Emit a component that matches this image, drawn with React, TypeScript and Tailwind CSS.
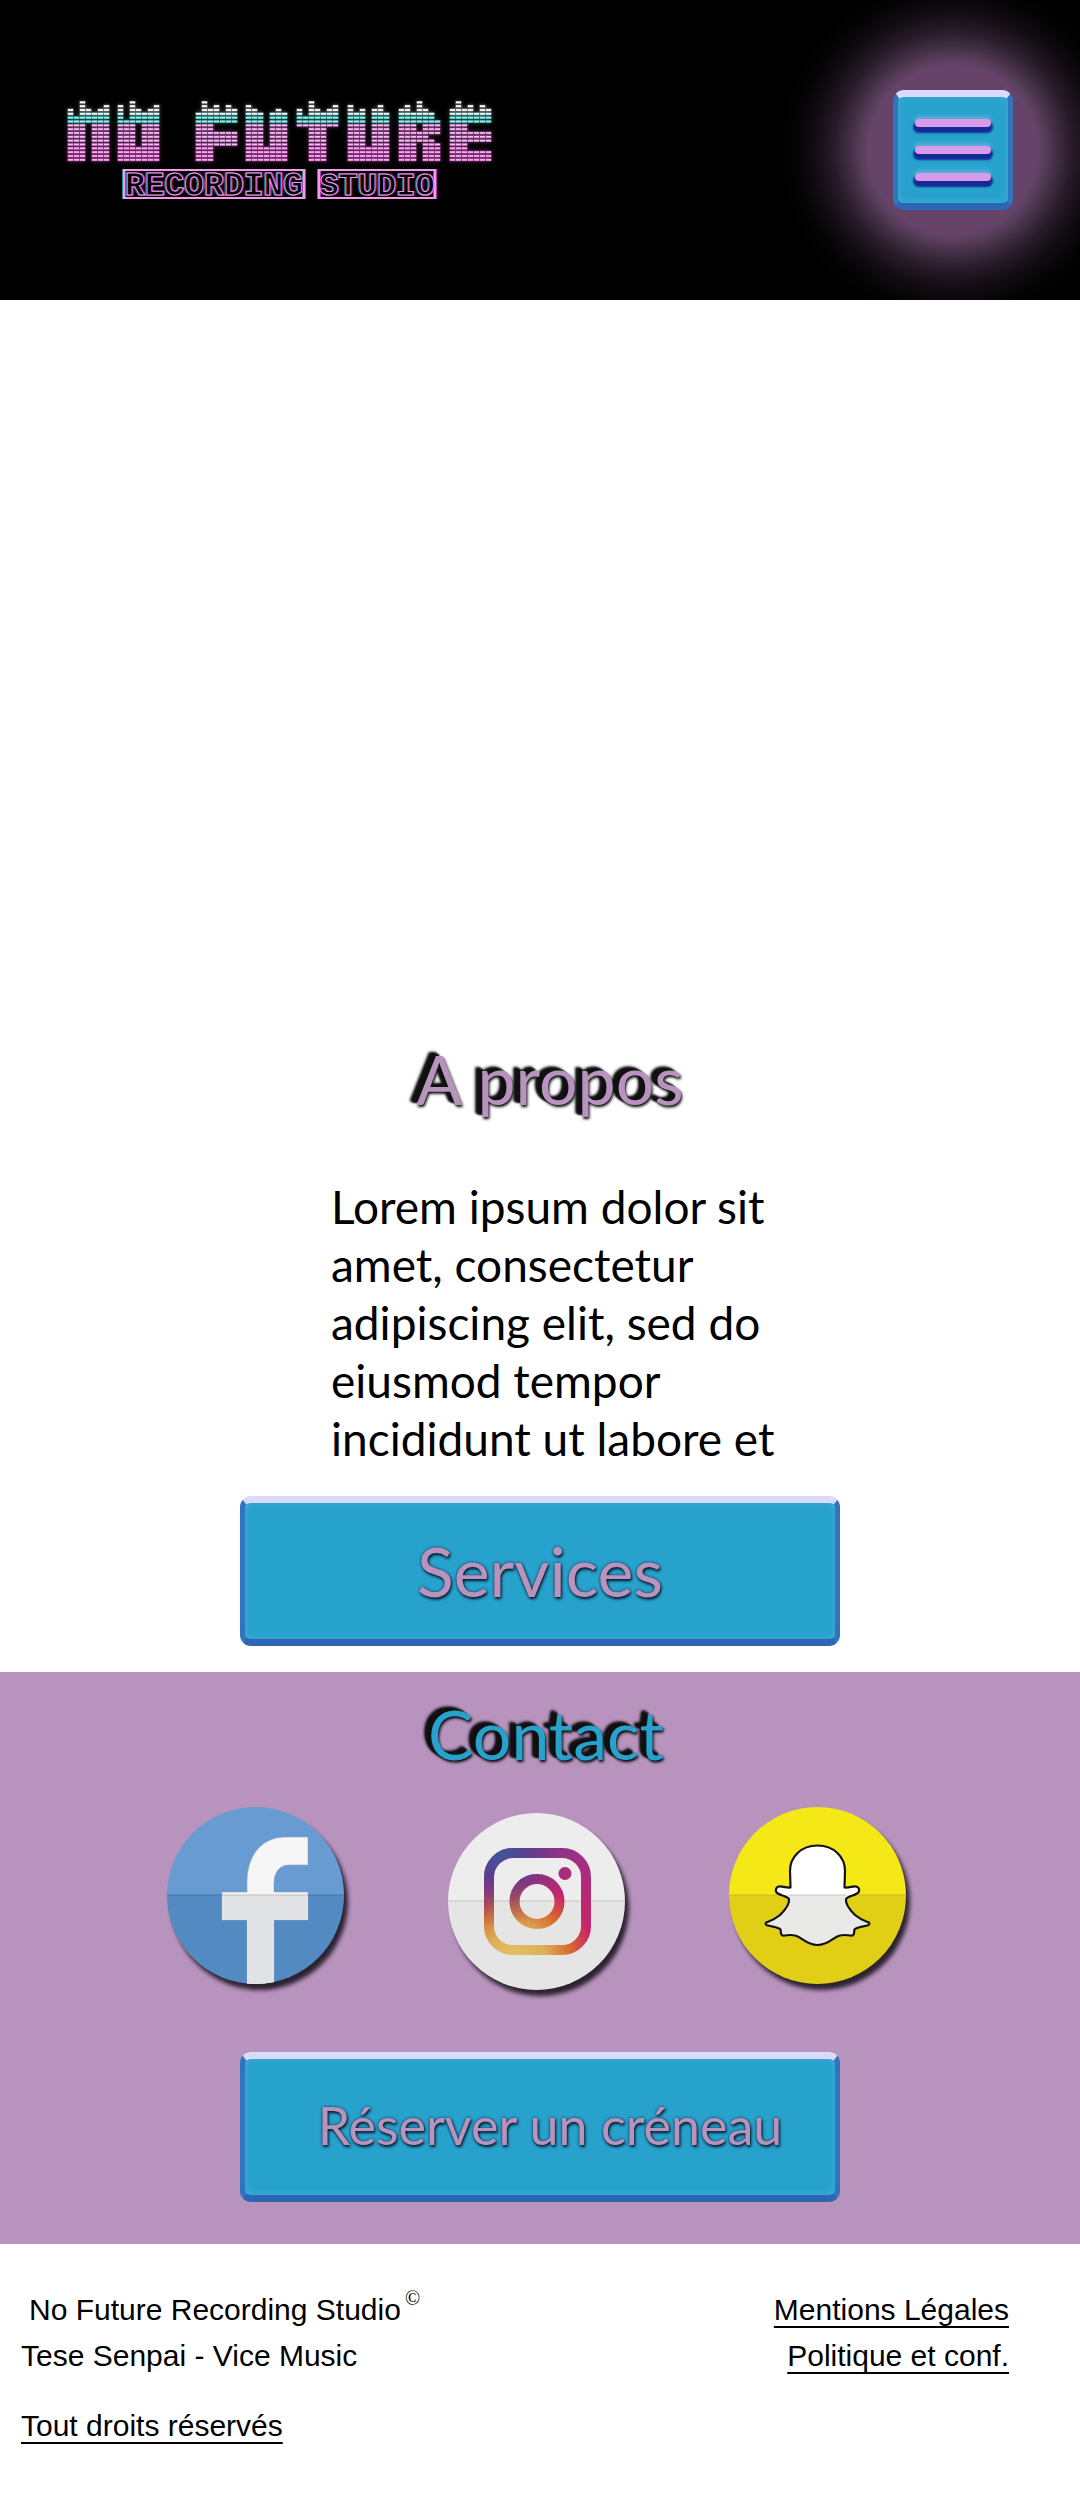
import type { ReactNode } from "react";

// Equaliser columns of the wordmark, one entry per letter, top row first.
const BLOCK = "XXXXXXX";
const LEGS = "XXX.XXX";
const LEFT = "XXX....";
const STEM = "..XXX..";
const rep = (row: string, n: number) => Array.from({ length: n }, () => row);

const WORDMARK: { x: number; rows: string[] }[] = [
  { x: 68, rows: ["..X....", "..X...X", "X.XX.XX", "X.XXXXX", BLOCK, BLOCK, ...rep(LEGS, 10)] },
  { x: 118, rows: ["..X....", "X.X...X", "X.XX.XX", "X.XXXXX", "X.XXXXX", BLOCK, ...rep(LEGS, 6), ...rep(BLOCK, 4)] },
  { x: 196, rows: [".X.....", ".X.X.X.", ".XXX.XX", BLOCK, BLOCK, BLOCK, LEFT, LEFT, ...rep(BLOCK, 4), ...rep(LEFT, 4)] },
  { x: 246, rows: [".......", "X......", "XX...X.", ...rep(LEGS, 9), ...rep(BLOCK, 4)] },
  { x: 297, rows: ["..X....", "..X...X", "X.XX.XX", "X.XXXXX", BLOCK, BLOCK, BLOCK, ...rep(STEM, 9)] },
  { x: 348, rows: [".......", "X....X.", "X.X.XX.", ...rep(LEGS, 9), ...rep(BLOCK, 4)] },
  { x: 399, rows: ["...X...", ".X.X...", "XX.XX..", "XXXXXX.", "XXXXXX.", BLOCK, LEGS, LEGS, BLOCK, "XXXXX..", "XXXXXX.", ...rep(LEGS, 5)] },
  { x: 450, rows: [".X.....", ".X.X.X.", "XXXX.XX", BLOCK, BLOCK, BLOCK, LEFT, LEFT, BLOCK, BLOCK, BLOCK, LEFT, LEFT, BLOCK, BLOCK, BLOCK] },
];

function rowColors(r: number): [string, string] {
  if (r < 3) return ["#8c8c8c", "#ffffff"];
  if (r === 3) return ["#6fb0b0", "#e6fbfb"];
  if (r < 6) return ["#2f9c9c", "#8ff0ea"];
  if (r < 12) return ["#a0489c", "#f9bdf4"];
  return ["#c03cb4", "#fcaaf2"];
}

function Logo() {
  const cells: ReactNode[] = [];
  WORDMARK.forEach(({ x, rows }, l) =>
    rows.forEach((row, r) =>
      row.split("").forEach((c, i) => {
        if (c !== "X") return;
        const [edge, core] = rowColors(r);
        const cx = x + i * 6;
        const cy = 101 + r * 3.83;
        cells.push(
          <g key={`${l}-${r}-${i}`}>
            <rect x={cx - 0.5} y={cy} width="6" height="2.7" fill={edge} />
            <rect x={cx} y={cy + 0.5} width="5" height="1.7" fill={core} />
          </g>
        );
      })
    )
  );
  const frames = [
    { x: 124, w: 180, word: "RECORDING" },
    { x: 319, w: 116, word: "STUDIO" },
  ];
  return (
    <svg
      viewBox="60 92 440 116"
      className="w-[440px] h-[116px] shrink"
      role="img"
      aria-label="No Future Recording Studio"
    >
      <defs>
        <filter id="neon" x="-5%" y="-10%" width="110%" height="120%">
          <feGaussianBlur stdDeviation="2" result="b" />
          <feComponentTransfer in="b" result="dim">
            <feFuncA type="linear" slope="0.45" />
          </feComponentTransfer>
          <feMerge>
            <feMergeNode in="dim" />
            <feMergeNode in="SourceGraphic" />
          </feMerge>
        </filter>
      </defs>
      <g filter="url(#neon)">{cells}</g>
      {[
        { dx: -1, color: "#2f8b96", w: 1 },
        { dx: 1, color: "#c02fb4", w: 1 },
        { dx: 0, color: "#ee9be8", w: 1 },
      ].map(({ dx, color, w }) => (
        <g key={color} transform={`translate(${dx} 0)`} fill={dx === 0 ? "#000" : "none"} stroke={color} strokeWidth={w}>
          {frames.map((f) => (
            <g key={f.word}>
              <rect x={f.x} y="170" width={f.w} height="28" fill="none" strokeWidth="2" />
              <text
                x={f.x + f.w / 2}
                y="195"
                textAnchor="middle"
                fontFamily="'Liberation Mono', monospace"
                fontWeight="700"
                fontSize={f.word === "STUDIO" ? 32 : 33}
              >
                {f.word}
              </text>
            </g>
          ))}
        </g>
      ))}
    </svg>
  );
}

const PLATE =
  "border-t-[7px] border-x-[5px] border-b-[7px] border-t-[#dadafa] border-x-[#3074bb] border-b-[#2c66b5] rounded-[11px] bg-[#26a2cd] shadow-[inset_0_0_8px_#49a8d6]";

const RAISED_SHADOW = "[text-shadow:-7px_-4px_3px_#111,-6px_-3px_2px_#111,-4px_-2px_2px_#111,1px_2px_3px_#000]";
const SOFT_SHADOW = "[text-shadow:1px_2px_3px_#0a1a2a,0_0_3px_#1c3850]";

function PlateButton({ children, className }: { children: ReactNode; className: string }) {
  return (
    <button
      type="button"
      className={`${PLATE} ${SOFT_SHADOW} mx-auto flex h-[150px] w-full max-w-[600px] items-center justify-center text-[#b793be] ${className}`}
    >
      {children}
    </button>
  );
}

function Disc({ id, top, bottom, split, children }: { id: string; top: string; bottom: string; split: string; children: ReactNode }) {
  return (
    <svg viewBox="0 0 177 177" className="size-[177px] overflow-visible drop-shadow-[4px_6px_2px_#2c2230]" aria-hidden="true">
      <defs>
        <clipPath id={`disc-${id}`}>
          <circle cx="88.5" cy="88.5" r="88.5" />
        </clipPath>
      </defs>
      <g clipPath={`url(#disc-${id})`}>
        <rect width="177" height="88" fill={top} />
        <rect y="88" width="177" height="89" fill={bottom} />
        <rect y="87.5" width="177" height="1" fill={split} />
        {children}
      </g>
    </svg>
  );
}

const F_PATH = "M80 180V113H55V85H80V75C80 48 95 30 119 30H141V58H122C112 58 107 66 107 76V85H141V113H107V180Z";
const GHOST =
  "M88.5 38.5C72 38.5 61 50 61 64L61.5 80.5C57 81 53 79 50 79.5C46 80.5 46 85 49 86.5C53 89 58 89 60 92C61 97 56 103 51 108C45 113 41 114 37 115.5C36 117 37 118 39 118.5C44 120 49 120 51.5 122.5C52 125 51.5 128 53.5 128.5C57 129 61 127 66 128.5C73 130 77 138 88.5 138C100 138 104 130 111 128.5C116 127 120 129 123.5 128.5C125.5 128 125 125 125.5 122.5C128 120 133 120 138 118.5C140 118 141 117 140 115.5C136 114 132 113 126 108C121 103 116 97 117 92C119 89 124 89 128 86.5C131 85 131 80.5 127 79.5C124 79 120 81 115.5 80.5L116 64C116 50 105 38.5 88.5 38.5Z";

function FacebookIcon() {
  return (
    <Disc id="fb" top="#689bd2" bottom="#548ac2" split="#4379ae">
      <path d={F_PATH} fill="#f6f6f6" stroke="#8fa5bd" strokeWidth="0.6" />
      <svg y="88" width="177" height="89" viewBox="0 88 177 89">
        <path d={F_PATH} fill="#e1e2e4" />
      </svg>
      <rect x="55" y="87.5" width="86" height="1" fill="#bcbec0" />
    </Disc>
  );
}

function InstagramIcon() {
  const shapes = (paint: string) => (
    <>
      <rect x="41" y="40" width="97" height="97" rx="24" fill="none" stroke={paint} strokeWidth="10" />
      <circle cx="89" cy="88.5" r="22.5" fill="none" stroke={paint} strokeWidth="10" />
      <circle cx="117" cy="60.5" r="6.5" fill={paint} />
    </>
  );
  return (
    <Disc id="ig" top="#ededed" bottom="#e5e5e5" split="#c6c6c8">
      <defs>
        <radialGradient id="ig-warm" gradientUnits="userSpaceOnUse" cx="68" cy="146" r="150">
          <stop offset="0" stopColor="#e2c367" />
          <stop offset="0.2" stopColor="#dcae58" />
          <stop offset="0.37" stopColor="#d8682f" />
          <stop offset="0.52" stopColor="#c6246c" />
          <stop offset="0.75" stopColor="#a82d7e" />
          <stop offset="1" stopColor="#6c4190" />
        </radialGradient>
        <radialGradient id="ig-cool" gradientUnits="userSpaceOnUse" cx="50" cy="34" r="80">
          <stop offset="0" stopColor="#3d5b9d" />
          <stop offset="0.35" stopColor="#4a4492" stopOpacity="0.9" />
          <stop offset="1" stopColor="#6c3a90" stopOpacity="0" />
        </radialGradient>
      </defs>
      {shapes("url(#ig-warm)")}
      {shapes("url(#ig-cool)")}
    </Disc>
  );
}

function SnapchatIcon() {
  return (
    <Disc id="sc" top="#f4e816" bottom="#e1cf16" split="#c9b928">
      <path d={GHOST} fill="#ffffff" />
      <svg y="88" width="177" height="89" viewBox="0 88 177 89">
        <path d={GHOST} fill="#e9e9e7" />
      </svg>
      <rect x="60" y="87.5" width="57" height="1" fill="#c6c6c6" />
      <path d={GHOST} fill="none" stroke="#121212" strokeWidth="2.2" strokeLinejoin="round" />
    </Disc>
  );
}

export default function App() {
  return (
    <div className="bg-white font-['Lato',sans-serif] text-black">
      <header className="flex h-[300px] items-center justify-between overflow-hidden bg-black pl-[60px] pr-[67px]">
        <Logo />
        <div className="relative">
          <div className="absolute -inset-[116px] rounded-full bg-[radial-gradient(circle,#66446a_0px,#66446a_84px,#5a3f5d_91px,#412e43_104px,#281b29_119px,#120c13_138px,#050405_156px,#000_176px)]" />
          <button
            type="button"
            aria-label="Menu"
            className={`${PLATE} relative flex size-[120px] flex-col items-center justify-center gap-[19px]`}
          >
            {[0, 1, 2].map((n) => (
              <span
                key={n}
                className="h-2 w-[76px] rounded-full bg-[#d99aea] shadow-[0_4px_2px_2px_#132a94,0_-3px_4px_#5db0da]"
              />
            ))}
          </button>
        </div>
      </header>

      <main>
        <section aria-label="Vidéo" className="h-[739px]" />

        <section className="pb-[26px]">
          <h2 className={`${RAISED_SHADOW} pl-5 text-center text-[68px] leading-[80px] text-[#b793be]`}>A propos</h2>
          <p className="mx-auto mt-[59px] max-w-[474px] pl-7 text-[46px] leading-[58px]">
            Lorem ipsum dolor sit amet, consectetur adipiscing elit, sed do eiusmod tempor incididunt ut labore et
          </p>
          <div className="mt-7">
            <PlateButton className="text-[68px]">Services</PlateButton>
          </div>
        </section>

        <section className="bg-[#b793be] pt-[22px] pb-[42px]">
          <h2 className={`${RAISED_SHADOW} pl-3 text-center text-[68px] leading-[80px] text-[#26a2cd]`}>Contact</h2>
          <nav aria-label="Réseaux sociaux" className="mt-[33px] flex justify-center gap-[104px] pr-2">
            <a href="#facebook" aria-label="Facebook">
              <FacebookIcon />
            </a>
            <a href="#instagram" aria-label="Instagram" className="pt-[6px]">
              <InstagramIcon />
            </a>
            <a href="#snapchat" aria-label="Snapchat">
              <SnapchatIcon />
            </a>
          </nav>
          <div className="mt-[62px]">
            <PlateButton className="pb-1 pl-5 text-[52px]">Réserver un créneau</PlateButton>
          </div>
        </section>
      </main>

      <footer className="flex justify-between pt-[43px] pb-10 pl-[21px] pr-[71px] font-['Liberation_Sans',Arial,sans-serif] text-[30px] leading-[46px]">
        <div>
          <p className="flex gap-1 pl-2">
            No Future Recording Studio
            <span className="font-['Liberation_Serif',serif] text-[20px] leading-[22px]">©</span>
          </p>
          <p>Tese Senpai - Vice Music</p>
          <p className="mt-6">
            <a href="#droits" className="underline decoration-2 underline-offset-[6px]">
              Tout droits réservés
            </a>
          </p>
        </div>
        <nav aria-label="Informations légales" className="flex flex-col items-end">
          <a href="#mentions" className="underline decoration-2 underline-offset-[6px] [text-decoration-skip-ink:none]">
            Mentions Légales
          </a>
          <a href="#politique" className="underline decoration-2 underline-offset-[6px] [text-decoration-skip-ink:none]">
            Politique et conf.
          </a>
        </nav>
      </footer>
    </div>
  );
}
